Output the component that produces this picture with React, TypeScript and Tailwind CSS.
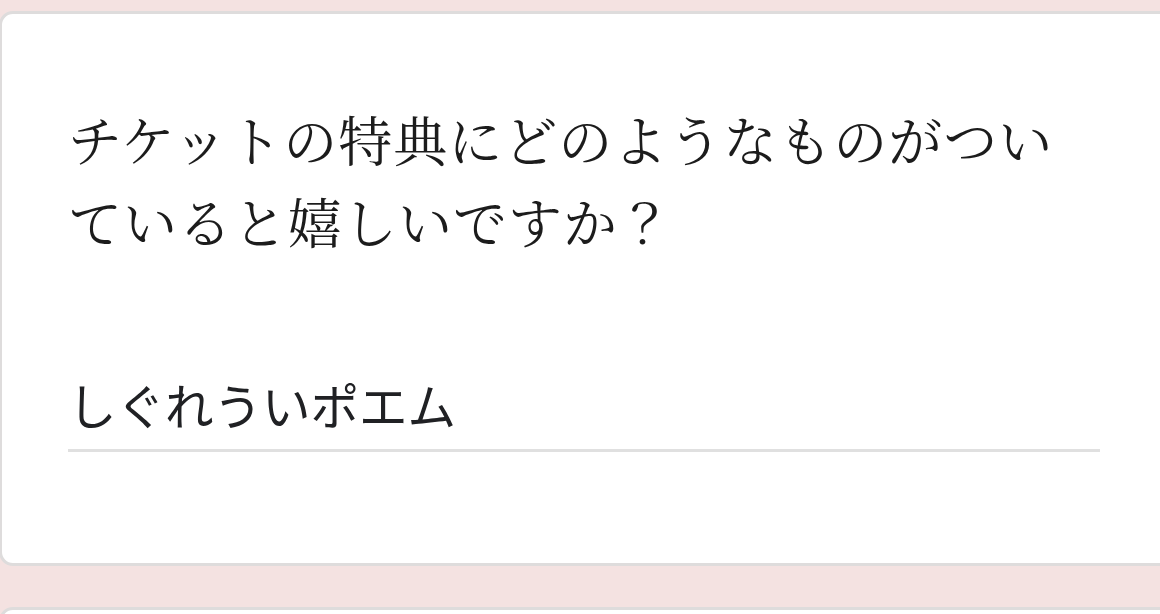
import React from "react";

const serifJa = {
  fontFamily:
    '"Noto Serif CJK JP", "Noto Sans CJK JP", "Liberation Serif", serif',
};

const QuestionCard: React.FC<{ title: string; answer: string }> = ({
  title,
  answer,
}) => {
  return (
    <div className="ml-[-1px] w-[1200px] rounded-[14px] border-[3px] border-[#dedcdc] bg-white pl-[66px] pt-[84px] pb-[111px]">
      {/* Question */}
      <div
        className="max-w-[1010px] text-[54px] leading-[82px] tracking-[1px] text-[#1c1c1c]"
        style={serifJa}
      >
        {title}
      </div>
      {/* Answer */}
      <div className="mt-[112px] w-[1032px] border-b-[3px] border-[#e0e0e0] pb-[15px]">
        <div className="font-['Noto_Sans_CJK_JP',sans-serif] text-[48.5px] leading-[60px] text-[#202124]">
          {answer}
        </div>
      </div>
    </div>
  );
};

export default function App() {
  return (
    <div className="h-[614px] w-[1160px] overflow-hidden bg-[#f4e2e1] pt-[11px]">
      <QuestionCard
        title="チケットの特典にどのようなものがついていると嬉しいですか？"
        answer="しぐれういポエム"
      />
      <div className="ml-[-1px] mt-[41px] h-[200px] w-[1200px] rounded-[14px] border-[3px] border-[#dedcdc] bg-white"></div>
    </div>
  );
}
